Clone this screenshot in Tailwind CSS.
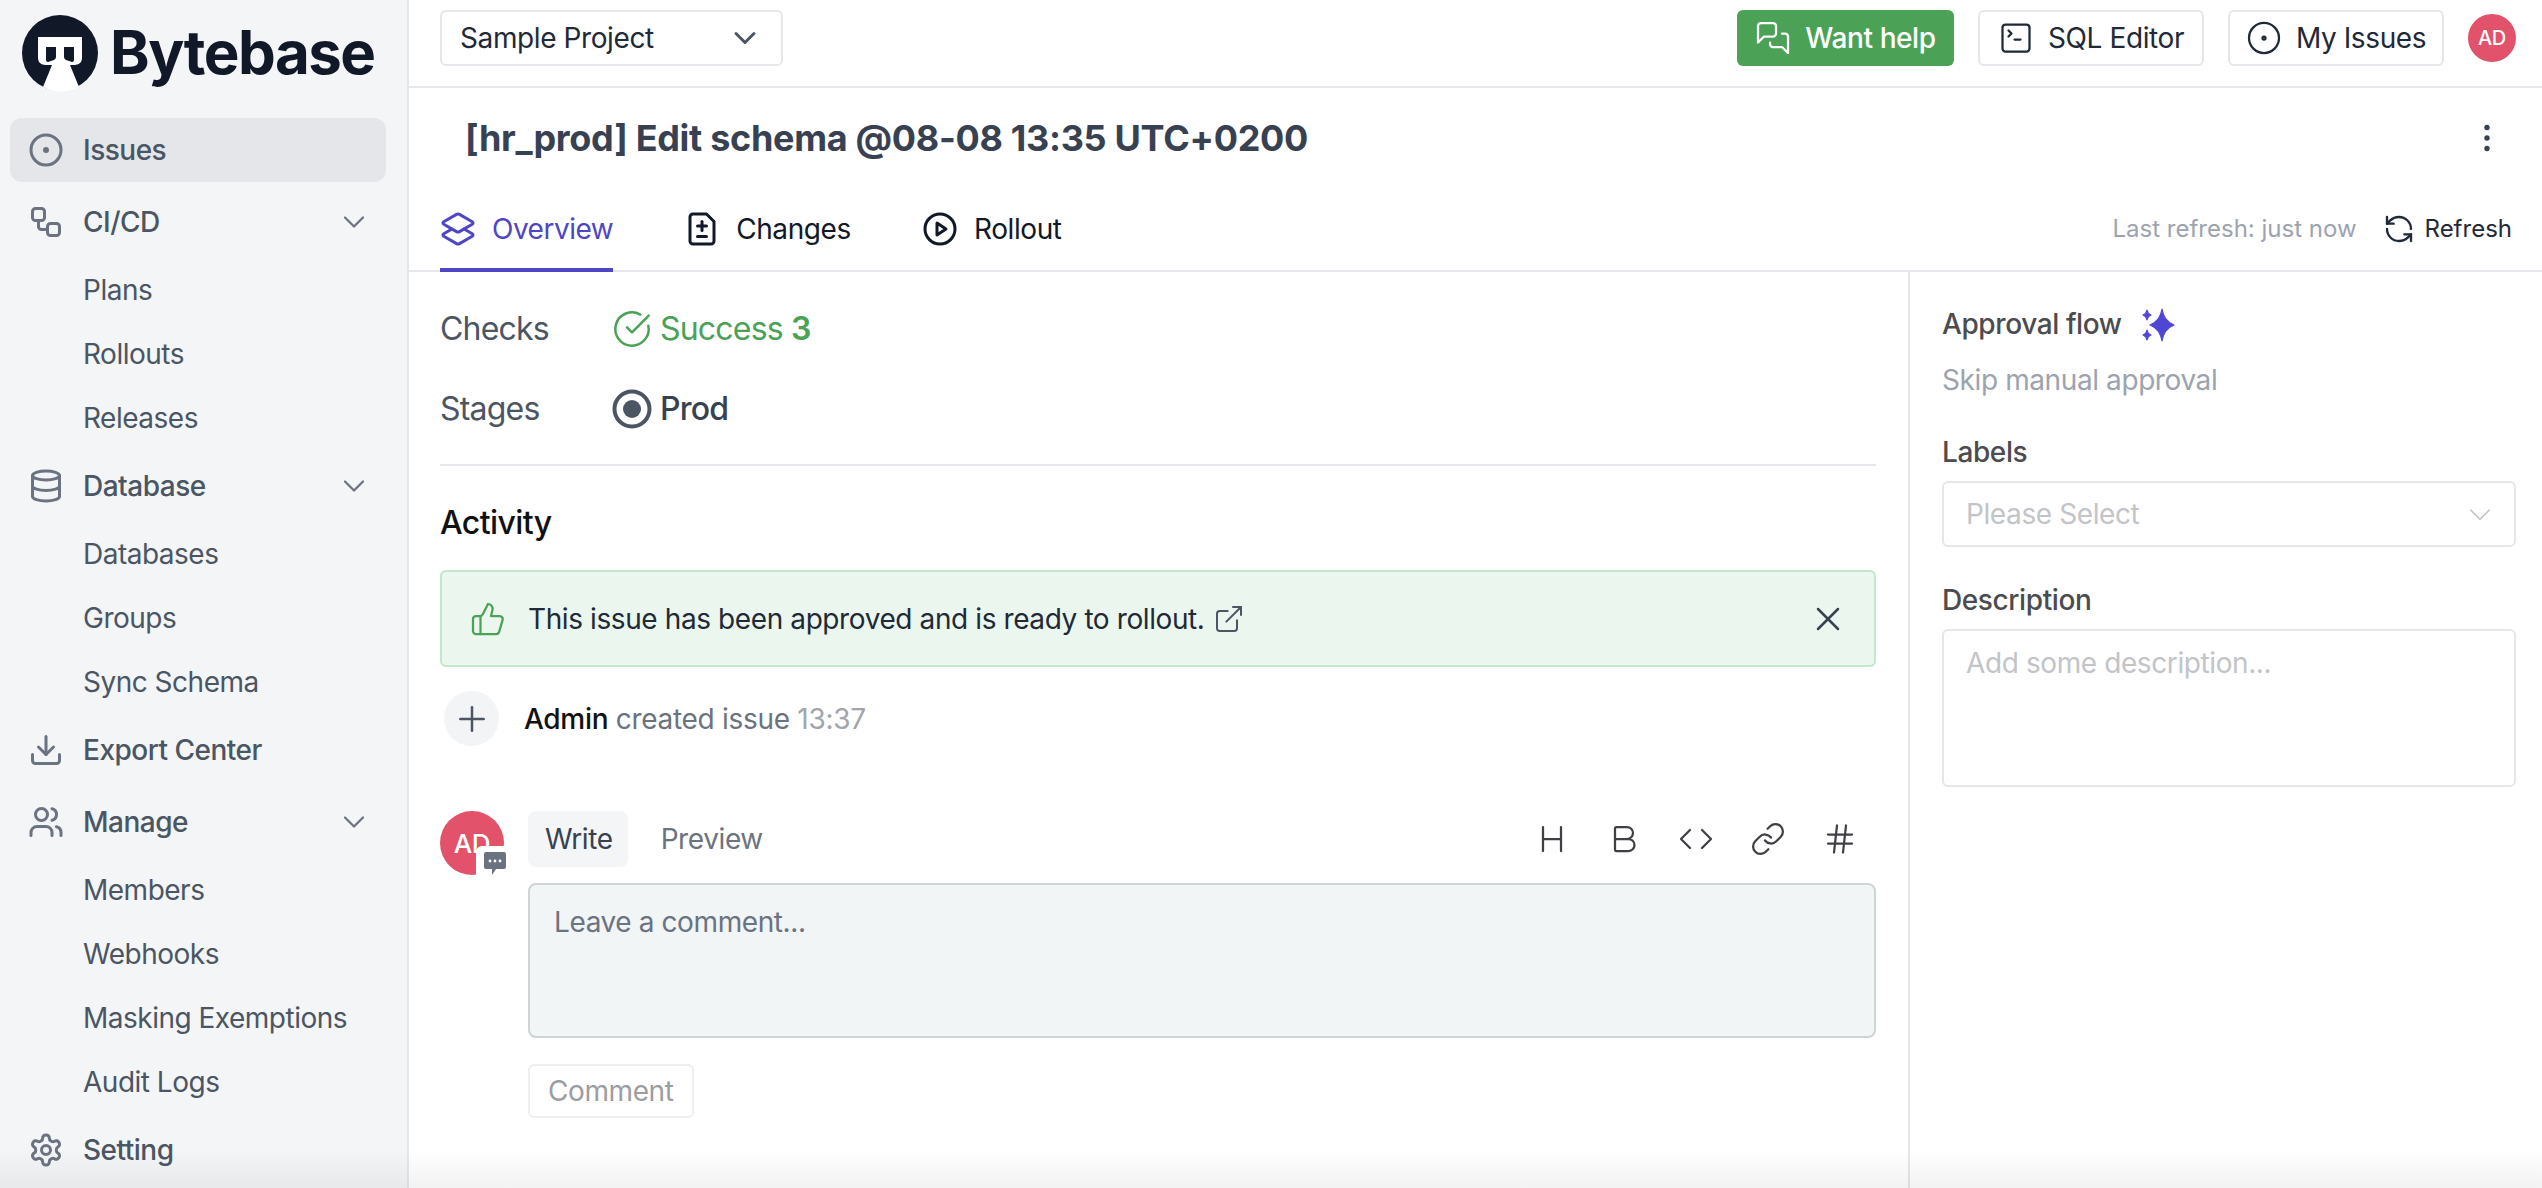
<!DOCTYPE html>
<html lang="en">
<head>
    <meta charset="UTF-8">
    <meta name="viewport" content="width=device-width, initial-scale=1.0">
    <title>Issue - Bytebase</title>
    <script src="https://cdn.jsdelivr.net/npm/@tailwindcss/browser@4"></script>
</head>
<body class="font-['Inter',sans-serif] text-[28px] tracking-[-0.4px] text-[#374151] bg-white">
<div class="relative flex h-screen w-screen overflow-hidden">

    <!-- sidebar -->
    <aside class="w-[409px] shrink-0 bg-[#f3f5f7] border-r-2 border-[#e5e7eb] pl-[10px] pr-[21px]">
        <div class="h-[118px] flex items-center pl-[10px]">
            <svg class="w-[80px] h-[80px] shrink-0 -mt-[12px]" viewBox="20 13 80 80">
                <circle cx="60" cy="53" r="38" fill="#111827"/>
                <path d="M38 37H82V58Q82 64 75 65H70L79 87Q60 96 43 87L52 65H45Q38 64 38 58Z" fill="#fff"/>
                <path d="M46 47H56V57Q56 59 54 60L48 62Q46 62 46 60Z M64 47H74V60Q74 62 72 62L66 60Q64 59 64 57Z" fill="#111827"/>
            </svg>
            <span class="ml-[10px] -mt-[14px] text-[60px] leading-none font-bold tracking-[-1.5px] text-[#111827]">Bytebase</span>
        </div>
        <nav class="flex flex-col gap-2 text-[#4b5563] tracking-[-0.5px]">
            <a class="h-16 flex items-center pl-[18px] gap-[19px] rounded-xl bg-[#e4e6e9] font-medium">
                <svg class="w-9 h-9 text-[#6b7280]" viewBox="0 0 24 24" fill="none" stroke="currentColor" stroke-width="2"><circle cx="12" cy="12" r="10"/><circle cx="12" cy="12" r="1"/></svg>
                Issues
            </a>
            <a class="h-16 flex items-center pl-[18px] pr-[14px] gap-[19px] font-medium">
                <svg class="w-9 h-9 text-[#6b7280]" viewBox="0 0 24 24" fill="none" stroke="currentColor" stroke-width="2" stroke-linecap="round" stroke-linejoin="round"><rect width="8" height="8" x="3" y="3" rx="2"/><path d="M7 11v4a2 2 0 0 0 2 2h4"/><rect width="8" height="8" x="13" y="13" rx="2"/></svg>
                CI/CD
                <svg class="w-9 h-9 ml-auto text-[#6b7280]" viewBox="0 0 24 24" fill="none" stroke="currentColor" stroke-width="1.5" stroke-linecap="round" stroke-linejoin="round"><path d="m6 9 6 6 6-6"/></svg>
            </a>
            <a class="h-14 flex items-center pl-[73px]">Plans</a>
            <a class="h-14 flex items-center pl-[73px]">Rollouts</a>
            <a class="h-14 flex items-center pl-[73px]">Releases</a>
            <a class="h-16 flex items-center pl-[18px] pr-[14px] gap-[19px] font-medium">
                <svg class="w-9 h-9 text-[#6b7280]" viewBox="0 0 24 24" fill="none" stroke="currentColor" stroke-width="2" stroke-linecap="round" stroke-linejoin="round"><ellipse cx="12" cy="5" rx="9" ry="3"/><path d="M3 5V19A9 3 0 0 0 21 19V5"/><path d="M3 12A9 3 0 0 0 21 12"/></svg>
                Database
                <svg class="w-9 h-9 ml-auto text-[#6b7280]" viewBox="0 0 24 24" fill="none" stroke="currentColor" stroke-width="1.5" stroke-linecap="round" stroke-linejoin="round"><path d="m6 9 6 6 6-6"/></svg>
            </a>
            <a class="h-14 flex items-center pl-[73px]">Databases</a>
            <a class="h-14 flex items-center pl-[73px]">Groups</a>
            <a class="h-14 flex items-center pl-[73px]">Sync Schema</a>
            <a class="h-16 flex items-center pl-[18px] gap-[19px] font-medium">
                <svg class="w-9 h-9 text-[#6b7280]" viewBox="0 0 24 24" fill="none" stroke="currentColor" stroke-width="2" stroke-linecap="round" stroke-linejoin="round"><path d="M21 15v4a2 2 0 0 1-2 2H5a2 2 0 0 1-2-2v-4"/><polyline points="7 10 12 15 17 10"/><line x1="12" x2="12" y1="15" y2="3"/></svg>
                Export Center
            </a>
            <a class="h-16 flex items-center pl-[18px] pr-[14px] gap-[19px] font-medium">
                <svg class="w-9 h-9 text-[#6b7280]" viewBox="0 0 24 24" fill="none" stroke="currentColor" stroke-width="2" stroke-linecap="round" stroke-linejoin="round"><path d="M16 21v-2a4 4 0 0 0-4-4H6a4 4 0 0 0-4 4v2"/><circle cx="9" cy="7" r="4"/><path d="M22 21v-2a4 4 0 0 0-3-3.87"/><path d="M16 3.13a4 4 0 0 1 0 7.75"/></svg>
                Manage
                <svg class="w-9 h-9 ml-auto text-[#6b7280]" viewBox="0 0 24 24" fill="none" stroke="currentColor" stroke-width="1.5" stroke-linecap="round" stroke-linejoin="round"><path d="m6 9 6 6 6-6"/></svg>
            </a>
            <a class="h-14 flex items-center pl-[73px]">Members</a>
            <a class="h-14 flex items-center pl-[73px]">Webhooks</a>
            <a class="h-14 flex items-center pl-[73px]">Masking Exemptions</a>
            <a class="h-14 flex items-center pl-[73px]">Audit Logs</a>
            <a class="h-16 flex items-center pl-[18px] gap-[19px] font-medium">
                <svg class="w-9 h-9 text-[#6b7280]" viewBox="0 0 24 24" fill="none" stroke="currentColor" stroke-width="2" stroke-linecap="round" stroke-linejoin="round"><path d="M12.22 2h-.44a2 2 0 0 0-2 2v.18a2 2 0 0 1-1 1.73l-.43.25a2 2 0 0 1-2 0l-.15-.08a2 2 0 0 0-2.73.73l-.22.38a2 2 0 0 0 .73 2.73l.15.1a2 2 0 0 1 1 1.72v.51a2 2 0 0 1-1 1.74l-.15.09a2 2 0 0 0-.73 2.73l.22.38a2 2 0 0 0 2.73.73l.15-.08a2 2 0 0 1 2 0l.43.25a2 2 0 0 1 1 1.73V20a2 2 0 0 0 2 2h.44a2 2 0 0 0 2-2v-.18a2 2 0 0 1 1-1.73l.43-.25a2 2 0 0 1 2 0l.15.08a2 2 0 0 0 2.73-.73l.22-.39a2 2 0 0 0-.73-2.73l-.15-.08a2 2 0 0 1-1-1.74v-.5a2 2 0 0 1 1-1.74l.15-.09a2 2 0 0 0 .73-2.73l-.22-.38a2 2 0 0 0-2.73-.73l-.15.08a2 2 0 0 1-2 0l-.43-.25a2 2 0 0 1-1-1.73V4a2 2 0 0 0-2-2z"/><circle cx="12" cy="12" r="3"/></svg>
                Setting
            </a>
        </nav>
    </aside>

    <main class="flex-1 min-w-0 flex flex-col">
        <!-- top bar -->
        <header class="h-[88px] shrink-0 border-b-2 border-[#e5e7eb] flex items-center pl-[31px] pr-[26px] pb-[10px]">
            <button class="w-[343px] h-14 flex items-center justify-between pl-[18px] pr-[18px] border-2 border-[#e5e7eb] rounded-md text-[#1f2937]">
                Sample Project
                <svg class="w-9 h-9 text-[#4b5563]" viewBox="0 0 24 24" fill="none" stroke="currentColor" stroke-width="2" stroke-linecap="round" stroke-linejoin="round"><path d="m6 9 6 6 6-6"/></svg>
            </button>
            <div class="ml-auto flex items-center gap-6">
                <button class="h-14 w-[217px] flex items-center justify-center gap-[14px] rounded-md bg-[#4ba256] text-white font-medium">
                    <svg class="w-9 h-9" viewBox="0 0 24 24" fill="none" stroke="currentColor" stroke-width="1.5" stroke-linecap="round" stroke-linejoin="round"><path d="M14 9a2 2 0 0 1-2 2H6l-4 4V4a2 2 0 0 1 2-2h8a2 2 0 0 1 2 2z"/><path d="M18 9h2a2 2 0 0 1 2 2v11l-4-4h-6a2 2 0 0 1-2-2v-1"/></svg>
                    Want help
                </button>
                <button class="h-14 w-[226px] flex items-center justify-center gap-[14px] rounded-md border-2 border-[#e5e7eb] text-[#1f2937]">
                    <svg class="w-9 h-9" viewBox="0 0 24 24" fill="none" stroke="currentColor" stroke-width="1.5" stroke-linecap="round" stroke-linejoin="round"><path d="m7 11 2-2-2-2"/><path d="M11 13h4"/><rect width="18" height="18" x="3" y="3" rx="2"/></svg>
                    SQL Editor
                </button>
                <button class="h-14 w-[216px] flex items-center justify-center gap-[14px] rounded-md border-2 border-[#e5e7eb] text-[#1f2937]">
                    <svg class="w-9 h-9" viewBox="0 0 24 24" fill="none" stroke="currentColor" stroke-width="1.5"><circle cx="12" cy="12" r="10"/><circle cx="12" cy="12" r="1"/></svg>
                    My Issues
                </button>
                <div class="w-12 h-12 rounded-full bg-[#e2526a] text-white text-[20px] font-medium flex items-center justify-center">AD</div>
            </div>
        </header>

        <!-- title -->
        <div class="h-[100px] shrink-0 flex items-center justify-between pl-[56px] pr-[37px]">
            <h1 class="text-[36px] font-bold tracking-[-0.3px] text-[#374151]">[hr_prod] Edit schema @08-08 13:35 UTC+0200</h1>
            <svg class="w-9 h-9 text-[#374151]" viewBox="0 0 24 24" fill="currentColor"><circle cx="12" cy="5" r="1.8"/><circle cx="12" cy="12" r="1.8"/><circle cx="12" cy="19" r="1.8"/></svg>
        </div>

        <!-- tabs -->
        <div class="h-[84px] shrink-0 flex items-stretch border-b-2 border-[#e5e7eb] pl-[31px] pr-[30px]">
            <a class="flex items-center gap-4 -mb-[2px] border-b-4 border-[#4f46c5] text-[#4f46c5] pt-[2px] tracking-[-0.5px]">
                <svg class="w-9 h-9" viewBox="0 0 24 24" fill="none" stroke="currentColor" stroke-width="2" stroke-linecap="round" stroke-linejoin="round"><path d="M13 13.74a2 2 0 0 1-2 0L2.5 8.87a1 1 0 0 1 0-1.74L11 2.26a2 2 0 0 1 2 0l8.5 4.87a1 1 0 0 1 0 1.74Z"/><path d="m16.02 12 5.48 3.13a1 1 0 0 1 0 1.74L13 21.74a2 2 0 0 1-2 0l-8.5-4.87a1 1 0 0 1 0-1.74L7.98 12"/></svg>
                Overview
            </a>
            <a class="flex items-center gap-4 ml-[71px] text-[#111827]">
                <svg class="w-9 h-9" viewBox="0 0 24 24" fill="none" stroke="currentColor" stroke-width="2" stroke-linecap="round" stroke-linejoin="round"><path d="M15 2H6a2 2 0 0 0-2 2v16a2 2 0 0 0 2 2h12a2 2 0 0 0 2-2V7Z"/><path d="M9 10h6"/><path d="M12 13V7"/><path d="M9 17h6"/></svg>
                Changes
            </a>
            <a class="flex items-center gap-4 ml-[71px] text-[#111827]">
                <svg class="w-9 h-9" viewBox="0 0 24 24" fill="none" stroke="currentColor" stroke-width="2" stroke-linecap="round" stroke-linejoin="round"><circle cx="12" cy="12" r="10"/><polygon points="10 8 16 12 10 16 10 8"/></svg>
                Rollout
            </a>
            <div class="ml-auto flex items-center text-[24px] tracking-normal">
                <span class="text-[#9ca3af]">Last refresh: just now</span>
                <svg class="w-8 h-8 ml-[26px] mr-[10px] text-[#1f2937]" viewBox="0 0 24 24" fill="none" stroke="currentColor" stroke-width="1.75" stroke-linecap="round" stroke-linejoin="round"><path d="M21 12a9 9 0 0 0-9-9 9.75 9.75 0 0 0-6.74 2.74L3 8"/><path d="M3 3v5h5"/><path d="M3 12a9 9 0 0 0 9 9 9.75 9.75 0 0 0 6.74-2.74L21 16"/><path d="M16 16h5v5"/></svg>
                <span class="text-[#1f2937]">Refresh</span>
            </div>
        </div>

        <div class="flex-1 min-h-0 flex">
            <!-- left column -->
            <section class="w-[1501px] shrink-0 pl-[31px] pr-[32px] pt-[33px] border-r-2 border-[#e5e7eb]">
                <div class="flex items-center h-12 text-[32px] tracking-[-0.8px]">
                    <span class="w-[172px] text-[#4b5563]">Checks</span>
                    <svg class="w-10 h-10 text-[#4ba256]" viewBox="0 0 24 24" fill="none" stroke="currentColor" stroke-width="1.5" stroke-linecap="round" stroke-linejoin="round"><path d="M21.801 10A10 10 0 1 1 17 3.335"/><path d="m9 11 3 3L22 4"/></svg>
                    <span class="ml-2 text-[#4ba256]">Success <b class="font-semibold">3</b></span>
                </div>
                <div class="flex items-center h-12 mt-[32px] text-[32px] tracking-[-0.8px]">
                    <span class="w-[172px] text-[#4b5563]">Stages</span>
                    <svg class="w-10 h-10 text-[#4b5563]" viewBox="0 0 40 40" fill="none" stroke="currentColor" stroke-width="4"><circle cx="20" cy="20" r="17.5"/><circle cx="20" cy="20" r="9" fill="currentColor" stroke="none"/></svg>
                    <span class="ml-2 font-medium text-[#374151]">Prod</span>
                </div>
                <div class="mt-[31px] border-t-2 border-[#e5e7eb]"></div>

                <h2 class="h-12 mt-[33px] flex items-center text-[32px] tracking-[-0.6px] font-medium text-[#111]">Activity</h2>

                <div class="mt-[23px] h-[97px] flex items-center pl-[28px] pr-[26px] border-2 border-[#c3e6cc] rounded-md bg-[#ebf7ee] text-[#1f2937]">
                    <svg class="w-9 h-9 text-[#4ba256] shrink-0" viewBox="0 0 24 24" fill="none" stroke="currentColor" stroke-width="1.5" stroke-linecap="round" stroke-linejoin="round"><path d="M7 10v12"/><path d="M15 5.88 14 10h5.83a2 2 0 0 1 1.92 2.56l-2.33 8A2 2 0 0 1 17.5 22H4a2 2 0 0 1-2-2v-8a2 2 0 0 1 2-2h2.76a2 2 0 0 0 1.79-1.11L12 2a3.13 3.13 0 0 1 3 3.88Z"/></svg>
                    <span class="ml-[22px]">This issue has been approved and is ready to rollout.</span>
                    <svg class="w-8 h-8 ml-[8px] text-[#4b5563]" viewBox="0 0 24 24" fill="none" stroke="currentColor" stroke-width="1.5" stroke-linecap="round" stroke-linejoin="round"><path d="M15 3h6v6"/><path d="M10 14 21 3"/><path d="M18 13v6a2 2 0 0 1-2 2H5a2 2 0 0 1-2-2V8a2 2 0 0 1 2-2h6"/></svg>
                    <svg class="w-10 h-10 ml-auto text-[#374151]" viewBox="0 0 24 24" fill="none" stroke="currentColor" stroke-width="1.5" stroke-linecap="round" stroke-linejoin="round"><path d="M18 6 6 18"/><path d="m6 6 12 12"/></svg>
                </div>

                <div class="mt-[24px] flex items-center pl-[4px]">
                    <div class="w-[55px] h-[55px] rounded-full bg-[#f3f4f6] flex items-center justify-center">
                        <svg class="w-10 h-10 text-[#4b5563]" viewBox="0 0 24 24" fill="none" stroke="currentColor" stroke-width="1.5" stroke-linecap="round"><path d="M5 12h14"/><path d="M12 5v14"/></svg>
                    </div>
                    <p class="ml-[25px] tracking-[-0.3px]"><span class="font-medium text-[#111]">Admin</span> <span class="text-[#6b7280]">created issue</span> <span class="text-[#a1a5ab]">13:37</span></p>
                </div>

                <div class="mt-[65px] flex gap-[24px]">
                    <div class="relative w-16 h-16 shrink-0 rounded-full bg-[#e2526a] text-white text-[26px] font-medium flex items-center justify-center">
                        AD
                        <div class="absolute -right-[3px] bottom-0 w-[31px] h-[29px] bg-white rounded-tl-md flex items-end justify-end">
                            <svg class="w-[24px] h-[24px]" viewBox="0 0 24 24"><path d="M3 1H21A2 2 0 0 1 23 3V16A2 2 0 0 1 21 18H13L9 24V18H3A2 2 0 0 1 1 16V3A2 2 0 0 1 3 1Z" fill="#6b7280"/><circle cx="7" cy="10" r="1.4" fill="#fff"/><circle cx="12" cy="10" r="1.4" fill="#fff"/><circle cx="17" cy="10" r="1.4" fill="#fff"/></svg>
                        </div>
                    </div>
                    <div class="flex-1 min-w-0">
                        <div class="h-14 flex items-center gap-4">
                            <button class="h-14 pl-[17px] pr-[15px] rounded-lg bg-[#f3f5f6] text-[#374151]">Write</button>
                            <button class="h-14 px-[17px] text-[#6b7280]">Preview</button>
                            <div class="ml-auto flex items-center gap-9 pr-[18px] text-[#3f3f46]">
                                <svg class="w-9 h-9" viewBox="0 0 24 24" fill="none" stroke="currentColor" stroke-width="1.5" stroke-linecap="round" stroke-linejoin="round"><path d="M6 12h12"/><path d="M6 20V4"/><path d="M18 20V4"/></svg>
                                <svg class="w-9 h-9" viewBox="0 0 24 24" fill="none" stroke="currentColor" stroke-width="1.5" stroke-linecap="round" stroke-linejoin="round"><path d="M6 12h9a4 4 0 0 1 0 8H7a1 1 0 0 1-1-1V5a1 1 0 0 1 1-1h7a4 4 0 0 1 0 8"/></svg>
                                <svg class="w-9 h-9" viewBox="0 0 24 24" fill="none" stroke="currentColor" stroke-width="1.5" stroke-linecap="round" stroke-linejoin="round"><polyline points="16 18 22 12 16 6"/><polyline points="8 6 2 12 8 18"/></svg>
                                <svg class="w-9 h-9" viewBox="0 0 24 24" fill="none" stroke="currentColor" stroke-width="1.5" stroke-linecap="round" stroke-linejoin="round"><path d="M10 13a5 5 0 0 0 7.54.54l3-3a5 5 0 0 0-7.07-7.07l-1.72 1.71"/><path d="M14 11a5 5 0 0 0-7.54-.54l-3 3a5 5 0 0 0 7.07 7.07l1.71-1.71"/></svg>
                                <svg class="w-9 h-9" viewBox="0 0 24 24" fill="none" stroke="currentColor" stroke-width="1.5" stroke-linecap="round"><line x1="4" x2="20" y1="9" y2="9"/><line x1="4" x2="20" y1="15" y2="15"/><line x1="10" x2="8" y1="3" y2="21"/><line x1="16" x2="14" y1="3" y2="21"/></svg>
                            </div>
                        </div>
                        <textarea class="mt-4 block w-full h-[155px] resize-none rounded-lg border-2 border-[#cfd4d6] bg-[#f1f5f6] px-[24px] py-[19px] leading-[36px] placeholder:text-[#6b7280]" placeholder="Leave a comment..."></textarea>
                        <button class="mt-[26px] h-[54px] px-[18px] rounded-md border-2 border-[#eeeff1] text-[#9a9da2]">Comment</button>
                    </div>
                </div>
            </section>

            <!-- right column -->
            <section class="flex-1 min-w-0 pl-[32px] pr-[26px] pt-[32px]">
                <div class="h-10 flex items-center gap-[18px] font-medium text-[#4b4b50]">
                    Approval flow
                    <svg class="w-[36px] h-[36px] text-[#4f46d5]" viewBox="0 0 36 36" fill="currentColor" stroke="currentColor" stroke-width="1.2" stroke-linejoin="round"><path d="M22 3C23.500 11 26 15.500 34 19C26 22.500 23.500 27 22 35C20.500 27 18 22.500 10 19C18 15.500 20.500 11 22 3Z"/><path d="M7 4C7.500 7 8.500 8 11 9C8.500 10 7.500 11 7 14C6.500 11 5.500 10 3 9C5.500 8 6.500 7 7 4Z"/><path d="M7 24C7.500 27 8.500 28 11 29C8.500 30 7.500 31 7 34C6.500 31 5.500 30 3 29C5.500 28 6.500 27 7 24Z"/></svg>
                </div>
                <div class="h-10 mt-[16px] flex items-center text-[#9ca3af]">Skip manual approval</div>
                <div class="h-10 mt-[32px] flex items-center font-medium text-[#4b4b50]">Labels</div>
                <button class="mt-[9px] w-full h-[66px] flex items-center justify-between pl-[22px] pr-[18px] border-2 border-[#e5e7eb] rounded-md text-[#c2c4c8]">
                    Please Select
                    <svg class="w-8 h-8" viewBox="0 0 24 24" fill="none" stroke="currentColor" stroke-width="1.2" stroke-linecap="round" stroke-linejoin="round"><path d="m5 9 7 7 7-7"/></svg>
                </button>
                <div class="h-10 mt-[33px] flex items-center font-medium text-[#4b4b50]">Description</div>
                <textarea class="mt-[9px] block w-full h-[158px] resize-none border-2 border-[#e5e7eb] rounded-md px-[22px] py-[14px] leading-[36px] placeholder:text-[#c2c4c8]" placeholder="Add some description..."></textarea>
            </section>
        </div>
    </main>

    <!-- soft fade along the bottom edge -->
    <div class="absolute left-0 right-0 bottom-0 h-[40px] pointer-events-none bg-linear-to-b from-transparent to-black/5"></div>
</div>
</body>
</html>
